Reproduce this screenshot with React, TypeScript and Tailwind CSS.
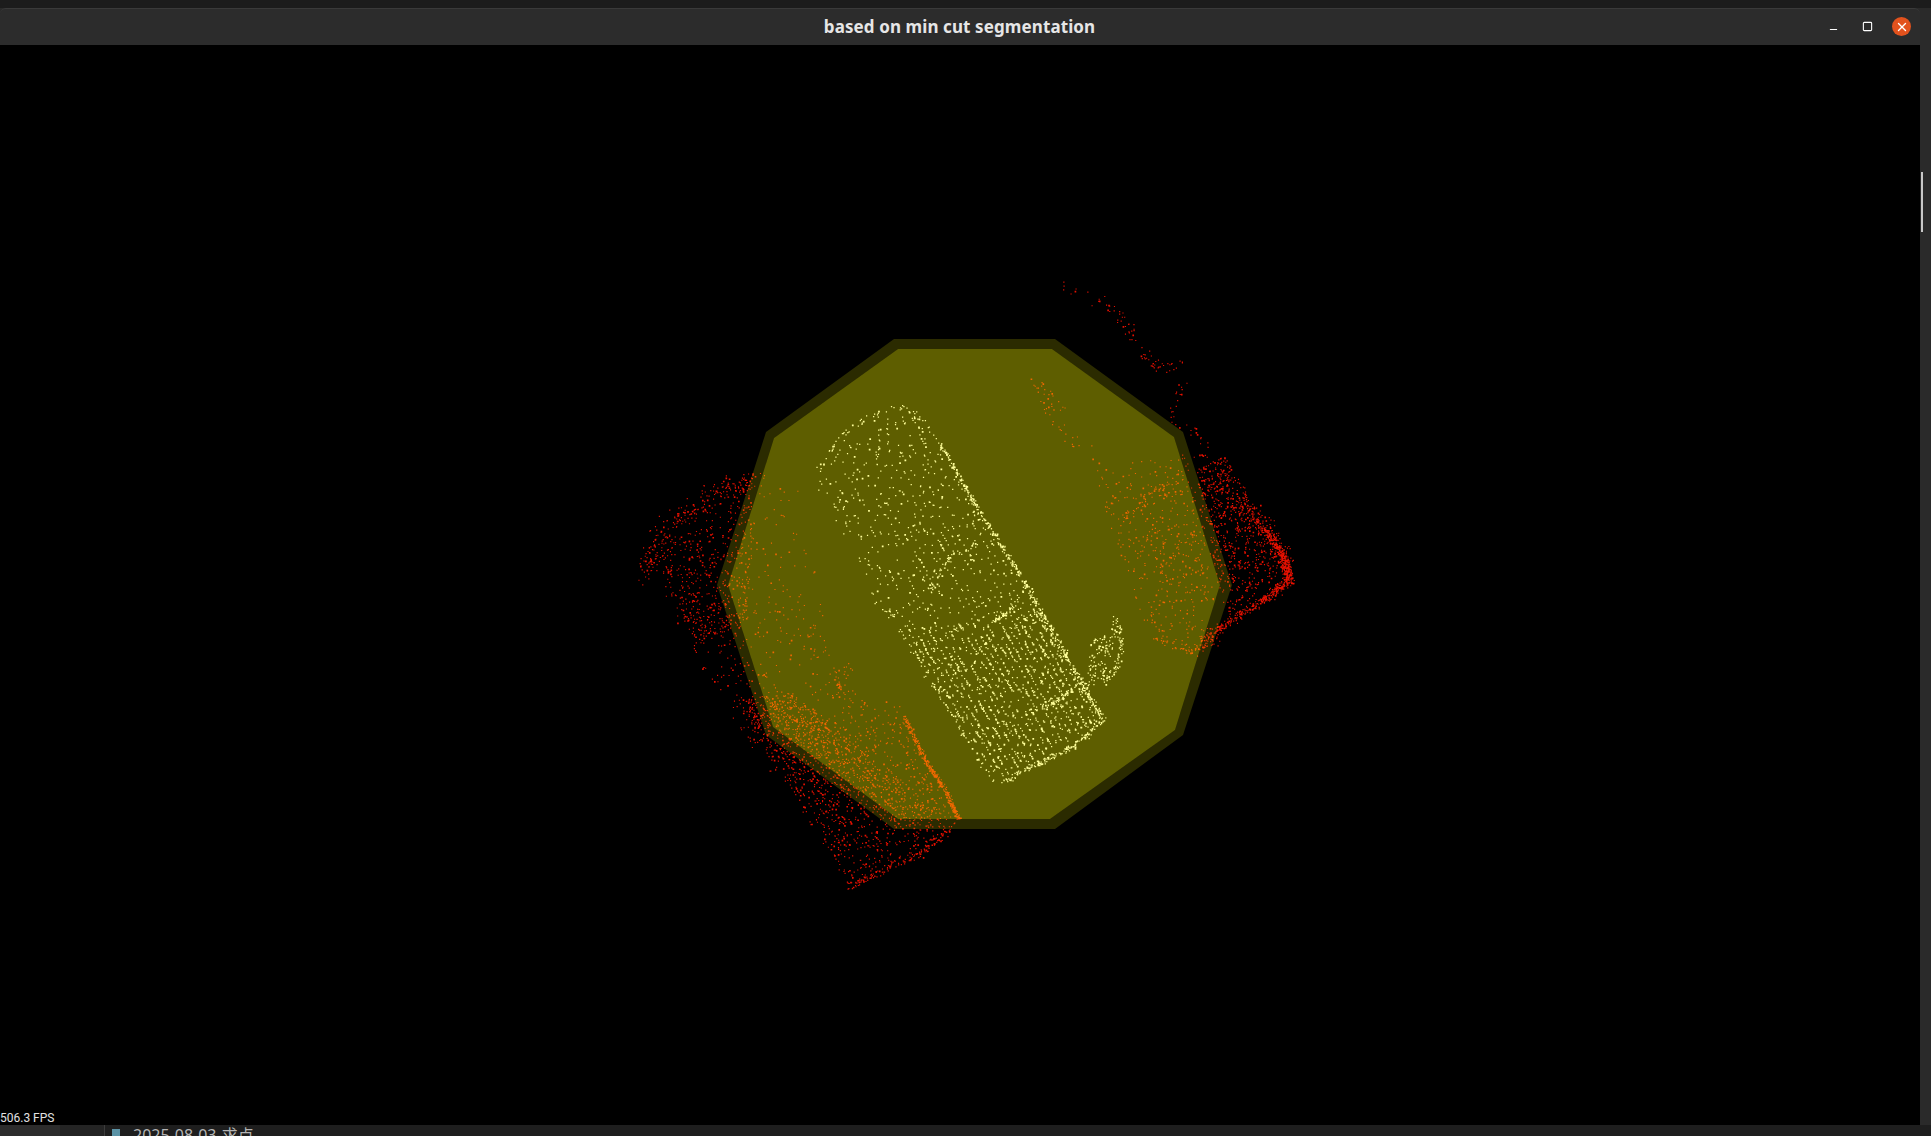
import { Minus, Square, X } from 'lucide-react'

type Pt = [number, number]

// small seeded generator so the cloud is the same on every render
function makeRandom(seed: number) {
  let a = seed
  return () => {
    a = (a + 0x6d2b79f5) | 0
    let t = Math.imul(a ^ (a >>> 15), 1 | a)
    t = (t + Math.imul(t ^ (t >>> 7), 61 | t)) ^ t
    return ((t ^ (t >>> 14)) >>> 0) / 4294967296
  }
}

const rnd = makeRandom(20250803)
const gauss = () => (rnd() + rnd() + rnd() - 1.5) / 1.5

// scatter inside a four cornered patch (a, b along one side, d, c along the other)
// rows > 0 lines the points up in scan lines running from a to b
function patch(out: Pt[], a: Pt, b: Pt, c: Pt, d: Pt, n: number, rows = 0) {
  for (let i = 0; i < n; i++) {
    const s = rnd()
    let t = rnd()
    if (rows > 0) t = (Math.round(t * rows) + gauss() * 0.3) / rows
    const lx = a[0] + (b[0] - a[0]) * s
    const ly = a[1] + (b[1] - a[1]) * s
    const rx = d[0] + (c[0] - d[0]) * s
    const ry = d[1] + (c[1] - d[1]) * s
    out.push([lx + (rx - lx) * t + gauss(), ly + (ry - ly) * t + gauss()])
  }
}

// scatter along a polyline
function strip(out: Pt[], line: Pt[], n: number, spread: number) {
  for (let i = 0; i < n; i++) {
    const f = rnd() * (line.length - 1)
    const k = Math.min(Math.floor(f), line.length - 2)
    const u = f - k
    out.push([
      line[k][0] + (line[k + 1][0] - line[k][0]) * u + gauss() * spread,
      line[k][1] + (line[k + 1][1] - line[k][1]) * u + gauss() * spread,
    ])
  }
}

const white: Pt[] = []
const red: Pt[] = []

// car body, sparse towards the roof and denser at the rear
patch(white, [812, 480], [905, 637], [1035, 600], [940, 445], 500, 20)
patch(white, [905, 637], [993, 782], [1102, 720], [1035, 600], 1250, 22)
patch(white, [812, 480], [845, 428], [915, 408], [940, 445], 85, 10)
strip(white, [[816, 470], [839, 437], [868, 416], [897, 405], [919, 420], [941, 447]], 60, 7)
strip(white, [[940, 445], [983, 517], [1027, 587]], 210, 4.5)
strip(white, [[1027, 587], [1070, 665], [1102, 720]], 230, 6)
strip(white, [[1102, 720], [1075, 745], [1040, 762], [1000, 783]], 160, 5)
strip(white, [[930, 590], [945, 560], [975, 545]], 55, 8)
strip(white, [[990, 623], [1004, 614], [1017, 600]], 45, 3)
strip(white, [[1043, 707], [1060, 698], [1077, 687]], 50, 5)
strip(white, [[870, 588], [905, 637], [945, 700], [990, 777]], 60, 8)
// mirror
patch(white, [1090, 640], [1086, 690], [1105, 675], [1118, 625], 90)
strip(white, [[1114, 615], [1120, 640], [1118, 662], [1104, 680]], 80, 6)

// left side, upper band
patch(red, [650, 560], [695, 640], [745, 625], [758, 482], 440)
strip(red, [[645, 575], [665, 530], [705, 498], [755, 478]], 260, 18)
patch(red, [735, 480], [735, 640], [830, 660], [800, 490], 90)
patch(red, [740, 610], [800, 720], [850, 690], [800, 590], 80)

// lower left, the dense car side
patch(red, [655, 590], [770, 780], [800, 730], [720, 590], 210)
patch(red, [735, 700], [850, 888], [955, 825], [790, 690], 1250, 30)
patch(red, [775, 725], [895, 825], [958, 815], [890, 690], 420, 24)
strip(red, [[905, 718], [925, 760], [945, 790], [958, 818]], 330, 3.6)
strip(red, [[958, 820], [925, 850], [885, 868], [850, 886]], 150, 7)
strip(red, [[852, 700], [835, 680], [850, 665]], 35, 10)

// right side
patch(red, [1195, 470], [1225, 620], [1288, 565], [1225, 455], 620)
strip(red, [[1265, 530], [1283, 555], [1289, 580], [1262, 600], [1200, 640]], 620, 8)
strip(red, [[1240, 500], [1268, 530], [1284, 560]], 150, 15)
patch(red, [1090, 470], [1150, 640], [1222, 650], [1190, 450], 360)
patch(red, [1135, 500], [1165, 600], [1220, 590], [1195, 480], 100)
strip(red, [[1124, 520], [1150, 492], [1180, 478]], 50, 8)
strip(red, [[1160, 640], [1195, 652], [1225, 625]], 70, 8)
// trail over the top
strip(red, [[1060, 285], [1111, 305], [1129, 330], [1150, 365], [1185, 368], [1172, 418], [1205, 440], [1200, 470]], 120, 11)
patch(red, [1024, 375], [1060, 440], [1110, 470], [1045, 380], 50)

const dots = (pts: Pt[], size: number) =>
  pts.map(([x, y], i) => {
    const s = i % 7 === 0 ? size + 0.5 : size
    return `M${x.toFixed(1)} ${y.toFixed(1)}h${s}v${s}h-${s}z`
  }).join('')

const whitePath = dots(white, 1.25)
const redPath = dots(red, 1.15)

const outer = '894,339 1055,339 1183,432 1232,585 1183,735 1055,829 894,829 766,735 717,585 766,432'
const inner = '898,349 1052,349 1174,437 1220,585 1175,730 1050,819 898,819 773,727 728,585 774,438'

function PointCloud() {
  return (
    <svg viewBox="0 45 1920 1080" className="block w-full h-full">
      <path d={redPath} fill="#e61000" />
      <path d={whitePath} fill="#fdfdf4" />
      <path d={`M${outer}Z M${inner}Z`} fillRule="evenodd" fill="#ffff00" fillOpacity={0.17} />
      <polygon points={inner} fill="#ffff00" fillOpacity={0.37} />
    </svg>
  )
}

export default function App() {
  return (
    <div className="w-[1931px] h-[1136px] flex flex-col overflow-hidden bg-[#2a2a2a] font-['Noto_Sans',sans-serif]">
      <div className="h-2 shrink-0 bg-[#1c1c1c]" />

      <div className="flex flex-1 min-h-0">
        <div className="flex flex-col w-[1920px] shrink-0">
          <div className="relative h-[37px] shrink-0 flex items-center justify-center rounded-t-md border-t border-[#3a3a3a] bg-[#2c2c2c]">
            <span className="text-[17px] font-bold text-[#e6e6e6] tracking-[0.1px] pr-[1px]">based on min cut segmentation</span>
            <div className="absolute right-0 top-0 h-full flex items-center">
              <Minus className="w-[11px] h-[11px] mr-[23px] mt-[4px] text-white" strokeWidth={2.2} />
              <Square className="w-[11px] h-[11px] mr-[19px] -mt-[1px] text-white" strokeWidth={2.4} absoluteStrokeWidth />
              <div className="w-[19px] h-[19px] mr-[9px] -mt-[1px] rounded-full bg-[#e2521d] flex items-center justify-center">
                <X className="w-[14px] h-[14px] text-[#fff]" strokeWidth={2.4} />
              </div>
            </div>
          </div>
          <div className="relative flex-1 min-h-0 bg-black">
            <PointCloud />
            <span className="absolute left-0 bottom-[1px] text-[12px] leading-none text-[#e2e2e2] font-['Roboto',sans-serif]">506.3 FPS</span>
          </div>
        </div>
        <div className="flex-1 pl-[1px] pt-[164px]">
          <div className="w-[2px] h-[60px] bg-[#c8c8c8]" />
        </div>
      </div>

      <div className="h-[11px] shrink-0 flex overflow-hidden bg-[#1e1e1e]">
        <div className="w-[60px] shrink-0 bg-[#2c2c2c]" />
        <div className="w-[45px] shrink-0 bg-[#242424] border-r border-[#3c3c3c]" />
        <div className="flex items-start gap-[13px] pl-[7px] pt-[4px]">
          <div className="w-[8px] h-[10px] bg-[#5b93a6]" />
          <span className="text-[16px] leading-none text-[#b4b4b4] -mt-[2px] font-['Noto_Sans','Noto_Sans_CJK_SC',sans-serif]">2025-08-03-求点</span>
        </div>
      </div>
    </div>
  )
}
